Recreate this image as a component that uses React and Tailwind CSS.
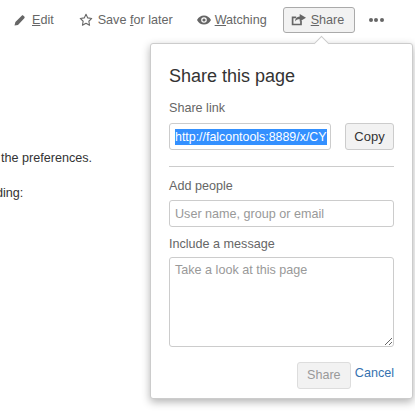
export default function App() {
  const font = { fontFamily: '"Liberation Sans", Arial, sans-serif' };
  return (
    <div style={font} className="relative h-[411px] w-[415px] overflow-hidden bg-white text-[12.6px] text-[#333]">
      <style>{`.ph::placeholder{color:#999;opacity:1}`}</style>
      <div className="flex h-[33px] items-end pl-[14px] pt-[7px]">
        <div className="flex h-[26px] items-center text-[#666]">
          <svg width="12" height="12" viewBox="0 0 12 12" className="mr-[6px]"><path d="M0.5 11.500l0.900-3.400 6.300-6.400c.5-.5 1.200-.5 1.700 0l.9.9c.5.5.5 1.200 0 1.700L4 11l-3.500.5z" fill="#666" /></svg>
          <span><u>E</u>dit</span>
        </div>
        <div className="ml-[25px] flex h-[26px] items-center text-[#666]">
          <svg width="14" height="14" viewBox="0 0 14 14" className="mr-[5px]"><path d="M7 1.200l1.750 3.700 4 .55-2.900 2.800.7 4L7 10.350 3.450 12.250l.7-4-2.900-2.800 4-.55z" fill="none" stroke="#666" strokeWidth="1.100" strokeLinejoin="round" /></svg>
          <span>Save <u>f</u>or later</span>
        </div>
        <div className="ml-[24px] flex h-[26px] items-center text-[#666]">
          <svg width="14" height="10" viewBox="0 0 14 10" className="mr-[4px]"><path fillRule="evenodd" d="M0 5C1.600 2 4 .5 7 .5S12.400 2 14 5c-1.600 3-4 4.500-7 4.500S1.600 8 0 5zm7-2.800a2.800 2.800 0 100 5.600 2.800 2.800 0 000-5.600z" fill="#666" /><circle cx="7" cy="5" r="1.600" fill="#666" /></svg>
          <span><u>W</u>atching</span>
        </div>
        <div className="ml-[16px] flex h-[26px] w-[72px] items-center rounded-[3px] border border-[#aaa] bg-[#f2f2f2] pl-[7px] text-[#666]">
          <svg width="15" height="13" viewBox="0 0 15 13" className="mr-[5px]"><path d="M10 6.600v3.900H1.600V3.400h3.600" fill="none" stroke="#666" strokeWidth="1.700" /><path d="M8.700 0L15 3.700 8.700 7.400V5.200c-2.200 0-3.700.6-4.700 2.400 0-3 1.600-4.800 4.700-5.200z" fill="#666" /></svg>
          <span><u>S</u>hare</span>
        </div>
        <div className="ml-[14px] flex h-[26px] items-center gap-[1.5px]">
          <span className="h-[4px] w-[4px] rounded-full bg-[#666]" />
          <span className="h-[4px] w-[4px] rounded-full bg-[#666]" />
          <span className="h-[4px] w-[4px] rounded-full bg-[#666]" />
        </div>
      </div>

      <div className="absolute left-0 top-[150px] text-[12.6px] leading-[16px] text-[#333]">
        <p className="ml-[1px] whitespace-nowrap">the preferences.</p>
        <p className="mt-[19px] -ml-[4px] whitespace-nowrap">ding:</p>
      </div>

      <div className="absolute left-[150px] top-[43px] h-[356px] w-[263px] rounded-[3px] border border-[#ccc] bg-white px-[18px] pt-[20px] shadow-[0_3px_8px_rgba(0,0,0,0.3)]">
        <div className="absolute -top-[6px] left-[165px] h-[11px] w-[11px] rotate-45 border-l border-t border-[#ccc] bg-white" />
        <h3 className="text-[18px] leading-[24px] text-[#333]">Share this page</h3>
        <div className="mt-[10px] leading-[20px] text-[#666]">Share link</div>
        <div className="mt-[5px] flex items-center justify-between">
          <div className="flex h-[27px] w-[162px] items-center overflow-hidden rounded-[3px] border border-[#ccc] pl-[5px] pr-[4px]">
            <span className="whitespace-nowrap bg-[#3390ff] text-[12.4px] leading-[16px] text-white">http://falcontools:8889/x/CY</span>
          </div>
          <button style={font} className="flex h-[27px] w-[49px] items-center justify-center rounded-[3px] border border-[#ccc] bg-[#f2f2f2] text-[13px] text-[#333]">Copy</button>
        </div>
        <div className="mt-[16px] h-px bg-[#ccc]" />
        <div className="mt-[9px] leading-[20px] text-[#666]">Add people</div>
        <input style={font} className="ph mt-[4px] block h-[27px] w-full rounded-[3px] border border-[#ccc] px-[5px] text-[12.6px] outline-none" placeholder="User name, group or email" />
        <div className="mt-[7px] leading-[20px] text-[#666]">Include a message</div>
        <textarea style={font} className="ph mt-[3px] block h-[90px] w-full resize rounded-[3px] border border-[#ccc] px-[5px] py-[3px] text-[12.6px] outline-none" placeholder="Take a look at this page" />
        <div className="mt-[15px] flex items-start justify-end">
          <button style={font} className="flex h-[27px] w-[54px] items-center justify-center rounded-[3px] border border-[#ddd] bg-[#f2f2f2] text-[12.6px] text-[#999]">Share</button>
          <a className="ml-[4px] leading-[22px] text-[#3572b0]">Cancel</a>
        </div>
      </div>
    </div>
  );
}
